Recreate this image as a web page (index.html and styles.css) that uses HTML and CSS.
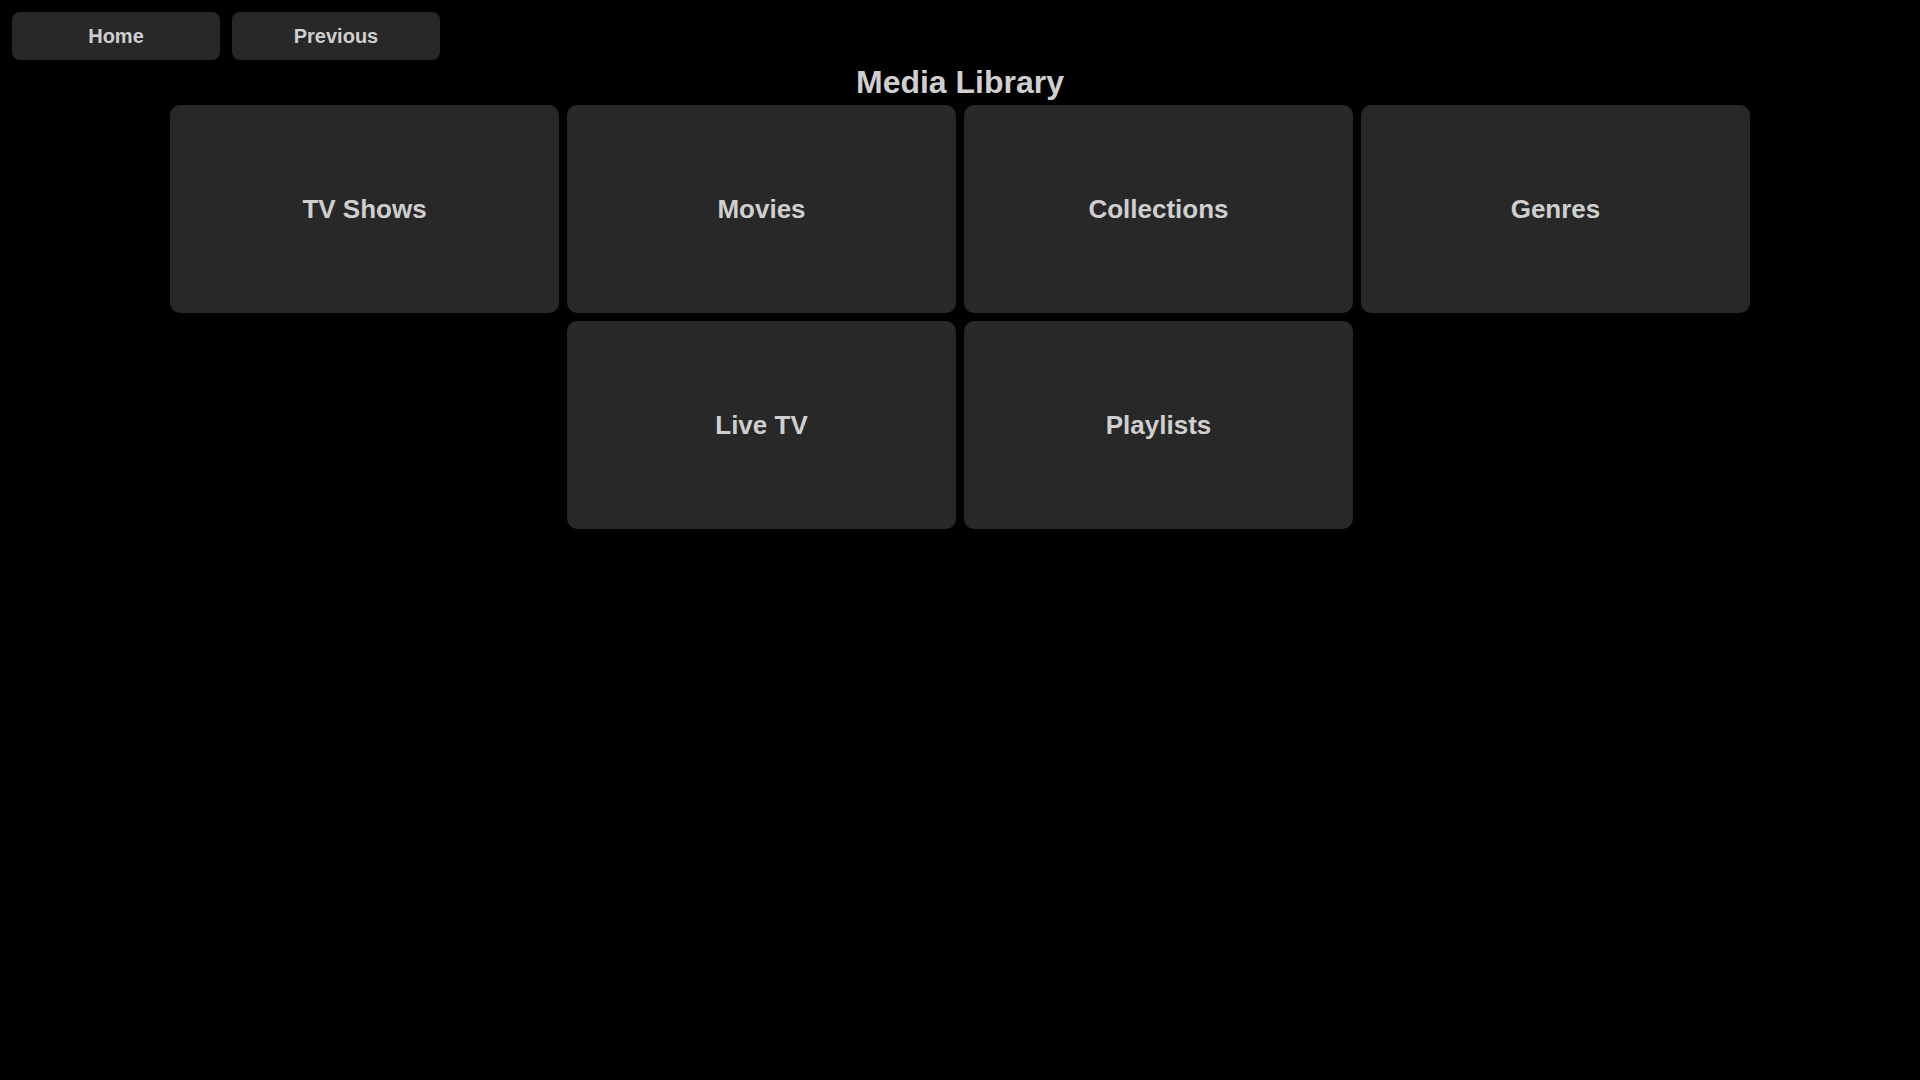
FILE: index.html
```html
<!DOCTYPE html>
<html lang="en">
<head>
<meta charset="utf-8">
<title>Media Library</title>
<link rel="stylesheet" href="styles.css">
</head>
<body>
<nav class="topbar">
  <button class="nav-btn">Home</button>
  <button class="nav-btn">Previous</button>
</nav>
<h1 class="title">Media Library</h1>
<main class="tiles">
  <div class="tile">TV Shows</div>
  <div class="tile">Movies</div>
  <div class="tile">Collections</div>
  <div class="tile">Genres</div>
  <div class="tile">Live TV</div>
  <div class="tile">Playlists</div>
</main>
</body>
</html>
```
FILE: styles.css
```css
html, body {
  margin: 0;
  padding: 0;
  background: #000;
  color: #cfcfcf;
  font-family: "Liberation Sans", Arial, sans-serif;
}
.topbar {
  display: flex;
  gap: 12px;
  padding: 12px 12px 0 12px;
}
.nav-btn {
  width: 208px;
  height: 48px;
  border: none;
  border-radius: 8px;
  background: #282828;
  color: #cfcfcf;
  font-family: "Liberation Sans", Arial, sans-serif;
  font-weight: bold;
  font-size: 20px;
  padding: 0;
}
.title {
  margin: 4px 0;
  text-align: center;
  font-size: 32px;
  font-weight: bold;
}
.tiles {
  width: 1580px;
  margin: 0 auto;
  display: flex;
  flex-wrap: wrap;
  justify-content: center;
  gap: 8px;
}
.tile {
  width: 389px;
  height: 208px;
  border-radius: 10px;
  background: #282828;
  display: flex;
  align-items: center;
  justify-content: center;
  font-size: 26px;
  font-weight: bold;
}
```
